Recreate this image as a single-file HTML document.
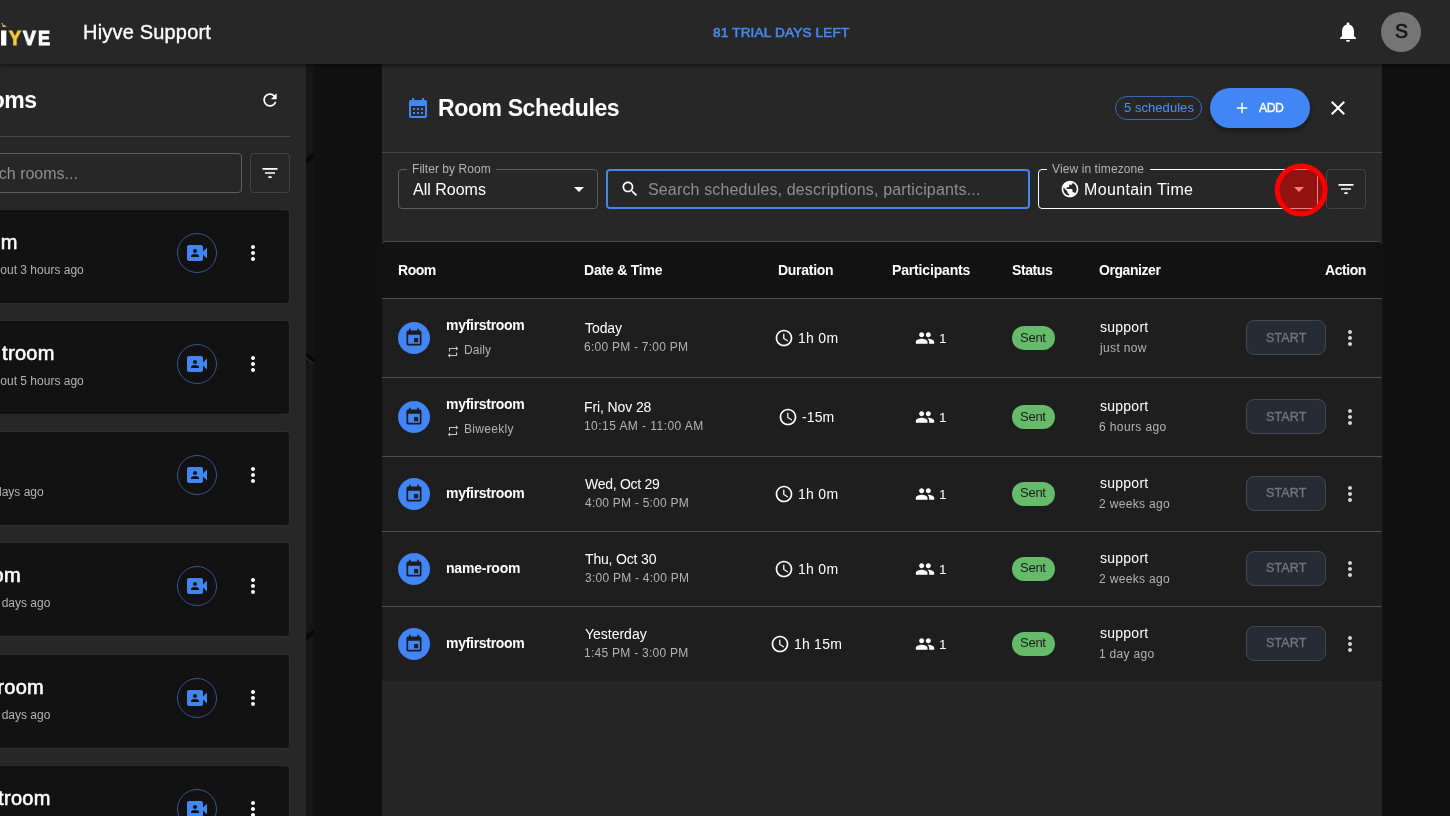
<!DOCTYPE html>
<html lang="en">
<head>
<meta charset="utf-8">
<title>Hiyve Support - Room Schedules</title>
<style>
*{box-sizing:border-box;margin:0;padding:0}
html,body{width:1450px;height:816px;overflow:hidden;background:#111;font-family:"Liberation Sans",sans-serif;color:#fff}
.abs{position:absolute}
.t{position:absolute;white-space:nowrap;line-height:1;will-change:transform}
svg{position:absolute;display:block}
#hdr{position:absolute;left:0;top:0;width:1450px;height:64px;background:#272727;box-shadow:0 2px 4px rgba(0,0,0,.45);overflow:hidden}
#left{position:absolute;left:0;top:64px;width:306px;height:752px;background:#272727;overflow:hidden}
#modal{position:absolute;left:382px;top:64px;width:1000px;height:752px;background:#272727;overflow:hidden}
</style>
</head>
<body>
<div id="left">
<div class="t" style="left:-41.1px;top:24.5px;font-size:23px;color:#fff;font-weight:bold;letter-spacing:-0.5px;margin-left:2px;">Rooms</div>
<svg style="left:260px;top:26px;" width="20" height="20" viewBox="0 0 24 24"><path fill="#fff" d="M17.65 6.35C16.2 4.9 14.21 4 12 4c-4.42 0-7.99 3.58-7.99 8s3.57 8 7.99 8c3.73 0 6.84-2.55 7.73-6h-2.08c-.82 2.33-3.04 4-5.65 4-3.31 0-6-2.69-6-6s2.69-6 6-6c1.66 0 3.14.69 4.22 1.78L13 11h7V4l-2.35 2.35z"/></svg>
<div class="abs" style="left:-10px;top:72px;width:300px;height:1px;background:#4a4a4a"></div>
<div class="abs" style="left:-40px;top:89px;width:282px;height:40px;border:1px solid #5e5e5e;border-radius:4px"></div>
<div class="t" style="left:-34.9px;top:101.5px;font-size:16px;color:#8f8f8f;">Search rooms...</div>
<div class="abs" style="left:250px;top:89px;width:40px;height:40px;border:1px solid #444;border-radius:4px"></div>
<svg style="left:260px;top:99px;" width="20" height="20" viewBox="0 0 24 24"><path fill="#fff" d="M10 18h4v-2h-4v2zM3 6v2h18V6H3zm3 7h12v-2H6v2z"/></svg>
<div class="abs" style="left:-20px;top:145px;width:310px;height:95px;background:#121212;border-radius:4px;border:1px solid #2d2d2d"></div>
<div class="t" style="left:-87.2px;top:168.0px;font-size:20px;color:#fff;-webkit-text-stroke:0.6px;letter-spacing:0.3px;margin-left:-3px;">myfirstroom</div>
<div class="t" style="left:-13.3px;top:200.0px;font-size:12px;color:#b3b3b3;">about 3 hours ago</div>
<div class="abs" style="left:177px;top:169px;width:40px;height:40px;border:1px solid #34578e;border-radius:50%"></div>
<svg style="left:185px;top:177px;" width="24" height="24" viewBox="0 0 24 24"><path fill="#4285f4" d="M18 10.48V6c0-1.1-.9-2-2-2H4c-1.1 0-2 .9-2 2v12c0 1.1.9 2 2 2h12c1.1 0 2-.9 2-2v-4.48l4 3.98v-11l-4 3.98zM10 8c1.1 0 2 .9 2 2s-.9 2-2 2-2-.9-2-2 .9-2 2-2zm4 8H6v-.57c0-.81.48-1.53 1.22-1.85.85-.37 1.79-.58 2.78-.58.99 0 1.93.21 2.78.58.74.32 1.22 1.04 1.22 1.85V16z"/></svg>
<svg style="left:241px;top:177px;" width="24" height="24" viewBox="0 0 24 24"><path fill="#fff" d="M12 8c1.1 0 2-.9 2-2s-.9-2-2-2-2 .9-2 2 .9 2 2 2zm0 2c-1.1 0-2 .9-2 2s.9 2 2 2 2-.9 2-2-.9-2-2-2zm0 6c-1.1 0-2 .9-2 2s.9 2 2 2 2-.9 2-2-.9-2-2-2z"/></svg>
<div class="abs" style="left:-20px;top:256px;width:310px;height:95px;background:#121212;border-radius:4px;border:1px solid #2d2d2d"></div>
<div class="t" style="left:-50.2px;top:279.0px;font-size:20px;color:#fff;-webkit-text-stroke:0.6px;letter-spacing:0.3px;margin-left:-3px;">myfirstroom</div>
<div class="t" style="left:-13.3px;top:311.0px;font-size:12px;color:#b3b3b3;">about 5 hours ago</div>
<div class="abs" style="left:0px;top:277px;width:1.5px;height:26px;background:#121212"></div>
<div class="abs" style="left:177px;top:280px;width:40px;height:40px;border:1px solid #34578e;border-radius:50%"></div>
<svg style="left:185px;top:288px;" width="24" height="24" viewBox="0 0 24 24"><path fill="#4285f4" d="M18 10.48V6c0-1.1-.9-2-2-2H4c-1.1 0-2 .9-2 2v12c0 1.1.9 2 2 2h12c1.1 0 2-.9 2-2v-4.48l4 3.98v-11l-4 3.98zM10 8c1.1 0 2 .9 2 2s-.9 2-2 2-2-.9-2-2 .9-2 2-2zm4 8H6v-.57c0-.81.48-1.53 1.22-1.85.85-.37 1.79-.58 2.78-.58.99 0 1.93.21 2.78.58.74.32 1.22 1.04 1.22 1.85V16z"/></svg>
<svg style="left:241px;top:288px;" width="24" height="24" viewBox="0 0 24 24"><path fill="#fff" d="M12 8c1.1 0 2-.9 2-2s-.9-2-2-2-2 .9-2 2 .9 2 2 2zm0 2c-1.1 0-2 .9-2 2s.9 2 2 2 2-.9 2-2-.9-2-2-2zm0 6c-1.1 0-2 .9-2 2s.9 2 2 2 2-.9 2-2-.9-2-2-2z"/></svg>
<div class="abs" style="left:-20px;top:367px;width:310px;height:95px;background:#121212;border-radius:4px;border:1px solid #2d2d2d"></div>
<div class="t" style="left:-15.4px;top:422.0px;font-size:12px;color:#b3b3b3;">4 days ago</div>
<div class="abs" style="left:177px;top:391px;width:40px;height:40px;border:1px solid #34578e;border-radius:50%"></div>
<svg style="left:185px;top:399px;" width="24" height="24" viewBox="0 0 24 24"><path fill="#4285f4" d="M18 10.48V6c0-1.1-.9-2-2-2H4c-1.1 0-2 .9-2 2v12c0 1.1.9 2 2 2h12c1.1 0 2-.9 2-2v-4.48l4 3.98v-11l-4 3.98zM10 8c1.1 0 2 .9 2 2s-.9 2-2 2-2-.9-2-2 .9-2 2-2zm4 8H6v-.57c0-.81.48-1.53 1.22-1.85.85-.37 1.79-.58 2.78-.58.99 0 1.93.21 2.78.58.74.32 1.22 1.04 1.22 1.85V16z"/></svg>
<svg style="left:241px;top:399px;" width="24" height="24" viewBox="0 0 24 24"><path fill="#fff" d="M12 8c1.1 0 2-.9 2-2s-.9-2-2-2-2 .9-2 2 .9 2 2 2zm0 2c-1.1 0-2 .9-2 2s.9 2 2 2 2-.9 2-2-.9-2-2-2zm0 6c-1.1 0-2 .9-2 2s.9 2 2 2 2-.9 2-2-.9-2-2-2z"/></svg>
<div class="abs" style="left:-20px;top:478px;width:310px;height:95px;background:#121212;border-radius:4px;border:1px solid #2d2d2d"></div>
<div class="t" style="left:-80.7px;top:501.0px;font-size:20px;color:#fff;-webkit-text-stroke:0.6px;letter-spacing:0.3px;margin-left:-3px;">name-room</div>
<div class="t" style="left:-15.1px;top:533.0px;font-size:12px;color:#b3b3b3;">14 days ago</div>
<div class="abs" style="left:177px;top:502px;width:40px;height:40px;border:1px solid #34578e;border-radius:50%"></div>
<svg style="left:185px;top:510px;" width="24" height="24" viewBox="0 0 24 24"><path fill="#4285f4" d="M18 10.48V6c0-1.1-.9-2-2-2H4c-1.1 0-2 .9-2 2v12c0 1.1.9 2 2 2h12c1.1 0 2-.9 2-2v-4.48l4 3.98v-11l-4 3.98zM10 8c1.1 0 2 .9 2 2s-.9 2-2 2-2-.9-2-2 .9-2 2-2zm4 8H6v-.57c0-.81.48-1.53 1.22-1.85.85-.37 1.79-.58 2.78-.58.99 0 1.93.21 2.78.58.74.32 1.22 1.04 1.22 1.85V16z"/></svg>
<svg style="left:241px;top:510px;" width="24" height="24" viewBox="0 0 24 24"><path fill="#fff" d="M12 8c1.1 0 2-.9 2-2s-.9-2-2-2-2 .9-2 2 .9 2 2 2zm0 2c-1.1 0-2 .9-2 2s.9 2 2 2 2-.9 2-2-.9-2-2-2zm0 6c-1.1 0-2 .9-2 2s.9 2 2 2 2-.9 2-2-.9-2-2-2z"/></svg>
<div class="abs" style="left:-20px;top:590px;width:310px;height:95px;background:#121212;border-radius:4px;border:1px solid #2d2d2d"></div>
<div class="t" style="left:-65.7px;top:613.0px;font-size:20px;color:#fff;-webkit-text-stroke:0.6px;letter-spacing:0.3px;margin-left:-3px;">secondroom</div>
<div class="t" style="left:-15.1px;top:645.0px;font-size:12px;color:#b3b3b3;">16 days ago</div>
<div class="abs" style="left:177px;top:614px;width:40px;height:40px;border:1px solid #34578e;border-radius:50%"></div>
<svg style="left:185px;top:622px;" width="24" height="24" viewBox="0 0 24 24"><path fill="#4285f4" d="M18 10.48V6c0-1.1-.9-2-2-2H4c-1.1 0-2 .9-2 2v12c0 1.1.9 2 2 2h12c1.1 0 2-.9 2-2v-4.48l4 3.98v-11l-4 3.98zM10 8c1.1 0 2 .9 2 2s-.9 2-2 2-2-.9-2-2 .9-2 2-2zm4 8H6v-.57c0-.81.48-1.53 1.22-1.85.85-.37 1.79-.58 2.78-.58.99 0 1.93.21 2.78.58.74.32 1.22 1.04 1.22 1.85V16z"/></svg>
<svg style="left:241px;top:622px;" width="24" height="24" viewBox="0 0 24 24"><path fill="#fff" d="M12 8c1.1 0 2-.9 2-2s-.9-2-2-2-2 .9-2 2 .9 2 2 2zm0 2c-1.1 0-2 .9-2 2s.9 2 2 2 2-.9 2-2-.9-2-2-2zm0 6c-1.1 0-2 .9-2 2s.9 2 2 2 2-.9 2-2-.9-2-2-2z"/></svg>
<div class="abs" style="left:-20px;top:701px;width:310px;height:95px;background:#121212;border-radius:4px;border:1px solid #2d2d2d"></div>
<div class="t" style="left:-54.2px;top:724.0px;font-size:20px;color:#fff;-webkit-text-stroke:0.6px;letter-spacing:0.3px;margin-left:-3px;">myfirstroom</div>
<div class="t" style="left:-15.1px;top:756.0px;font-size:12px;color:#b3b3b3;">17 days ago</div>
<div class="abs" style="left:177px;top:725px;width:40px;height:40px;border:1px solid #34578e;border-radius:50%"></div>
<svg style="left:185px;top:733px;" width="24" height="24" viewBox="0 0 24 24"><path fill="#4285f4" d="M18 10.48V6c0-1.1-.9-2-2-2H4c-1.1 0-2 .9-2 2v12c0 1.1.9 2 2 2h12c1.1 0 2-.9 2-2v-4.48l4 3.98v-11l-4 3.98zM10 8c1.1 0 2 .9 2 2s-.9 2-2 2-2-.9-2-2 .9-2 2-2zm4 8H6v-.57c0-.81.48-1.53 1.22-1.85.85-.37 1.79-.58 2.78-.58.99 0 1.93.21 2.78.58.74.32 1.22 1.04 1.22 1.85V16z"/></svg>
<svg style="left:241px;top:733px;" width="24" height="24" viewBox="0 0 24 24"><path fill="#fff" d="M12 8c1.1 0 2-.9 2-2s-.9-2-2-2-2 .9-2 2 .9 2 2 2zm0 2c-1.1 0-2 .9-2 2s.9 2 2 2 2-.9 2-2-.9-2-2-2zm0 6c-1.1 0-2 .9-2 2s.9 2 2 2 2-.9 2-2-.9-2-2-2z"/></svg>
</div>
<svg style="left:306px;top:64px" width="8" height="752" viewBox="0 0 8 752"><rect width="8" height="752" fill="#161616"/><rect y="96" width="8" height="196" fill="#141414"/><path fill="#090909" d="M0 94.500L8 88.500V94.500L0 100z M0 288.500L8 294.500V299L0 293z M0 571L8 565V570.500L0 576.500z"/><path fill="#262626" d="M0 293L8 299V301L0 295z"/></svg>
<div id="modal">
<svg style="left:24px;top:32px;" width="24" height="24" viewBox="0 0 24 24"><path fill="#4285f4" d="M19 4h-1V2h-2v2H8V2H6v2H5c-1.11 0-1.99.9-1.99 2L3 20c0 1.1.89 2 2 2h14c1.1 0 2-.9 2-2V6c0-1.1-.9-2-2-2zm0 16H5V10h14v10zM9 14H7v-2h2v2zm4 0h-2v-2h2v2zm4 0h-2v-2h2v2zm-8 4H7v-2h2v2zm4 0h-2v-2h2v2zm4 0h-2v-2h2v2z"/></svg>
<div class="t" style="left:55.5px;top:32.5px;font-size:23px;color:#fff;font-weight:bold;letter-spacing:-0.38px;">Room Schedules</div>
<div class="abs" style="left:733px;top:32px;width:87px;height:24px;border:1px solid #3569bd;border-radius:12px"></div>
<div class="t" style="left:741.7px;top:37.0px;font-size:13px;color:#4f8ff5;letter-spacing:0.05px;">5 schedules</div>
<div class="abs" style="left:828px;top:24px;width:100px;height:40px;background:#4285f4;border-radius:20px;box-shadow:0 3px 5px rgba(0,0,0,.4)"></div>
<svg style="left:851px;top:35px;" width="18" height="18" viewBox="0 0 24 24"><path fill="#fff" d="M19 13h-6v6h-2v-6H5v-2h6V5h2v6h6v2z"/></svg>
<div class="t" style="left:877.3px;top:37.9px;font-size:12.2px;color:#fff;letter-spacing:-0.45px;-webkit-text-stroke:0.35px;">ADD</div>
<svg style="left:944px;top:32px;" width="24" height="24" viewBox="0 0 24 24"><path fill="#fff" d="M19 6.41 17.59 5 12 10.59 6.41 5 5 6.41 10.59 12 5 17.59 6.41 19 12 13.41 17.59 19 19 17.59 13.41 12z"/></svg>
<div class="abs" style="left:0px;top:88px;width:1000px;height:1px;background:#454545"></div>
<div class="abs" style="left:16px;top:105px;width:200px;height:40px;border:1px solid #5e5e5e;border-radius:4px"></div>
<div class="abs" style="left:25px;top:103px;width:89px;height:5px;background:#272727"></div>
<div class="t" style="left:29.8px;top:99.0px;font-size:12px;color:#b3b3b3;letter-spacing:0.05px;">Filter by Room</div>
<div class="t" style="left:30.8px;top:117.5px;font-size:16px;color:#fff;">All Rooms</div>
<svg style="left:185px;top:113px;" width="24" height="24" viewBox="0 0 24 24"><path fill="#fff" d="M7 10l5 5 5-5z"/></svg>
<div class="abs" style="left:224px;top:105px;width:424px;height:40px;border:2px solid #4285f4;border-radius:4px"></div>
<svg style="left:238px;top:115px;" width="20" height="20" viewBox="0 0 24 24"><path fill="#fff" d="M15.5 14h-.79l-.28-.27C15.41 12.59 16 11.11 16 9.5 16 5.91 13.09 3 9.5 3S3 5.91 3 9.5 5.91 16 9.5 16c1.61 0 3.09-.59 4.23-1.57l.27.28v.79l5 4.99L20.49 19l-4.99-5zm-6 0C7.01 14 5 11.99 5 9.5S7.01 5 9.5 5 14 7.01 14 9.5 11.99 14 9.5 14z"/></svg>
<div class="t" style="left:265.9px;top:117.5px;font-size:16px;color:#8f8f8f;letter-spacing:0.15px;">Search schedules, descriptions, participants...</div>
<div class="abs" style="left:656px;top:105px;width:280px;height:40px;border:1px solid #fff;border-radius:4px"></div>
<div class="abs" style="left:665px;top:103px;width:103px;height:5px;background:#272727"></div>
<div class="t" style="left:670.3px;top:99.0px;font-size:12px;color:#b3b3b3;letter-spacing:0.1px;">View in timezone</div>
<svg style="left:677.8px;top:115.30000000000001px;" width="20" height="20" viewBox="0 0 24 24"><path fill="#fff" d="M12 2C6.48 2 2 6.48 2 12s4.48 10 10 10 10-4.48 10-10S17.52 2 12 2zm-1 17.93c-3.95-.49-7-3.85-7-7.93 0-.62.08-1.21.21-1.79L9 15v1c0 1.1.9 2 2 2v1.93zm6.9-2.54c-.26-.81-1-1.39-1.9-1.39h-1v-3c0-.55-.45-1-1-1H8v-2h2c.55 0 1-.45 1-1V7h2c1.1 0 2-.9 2-2v-.41c2.93 1.19 5 4.06 5 7.41 0 2.08-.8 3.97-2.1 5.39z"/></svg>
<div class="t" style="left:701.6px;top:117.5px;font-size:16px;color:#fff;letter-spacing:0.34px;">Mountain Time</div>
<svg style="left:905px;top:113px;" width="24" height="24" viewBox="0 0 24 24"><path fill="#fff" d="M7 10l5 5 5-5z"/></svg>
<div class="abs" style="left:944px;top:105px;width:40px;height:40px;border:1px solid #444;border-radius:4px"></div>
<svg style="left:954px;top:115px;" width="20" height="20" viewBox="0 0 24 24"><path fill="#fff" d="M10 18h4v-2h-4v2zM3 6v2h18V6H3zm3 7h12v-2H6v2z"/></svg>
<svg style="left:889px;top:96px" width="60" height="60" viewBox="0 0 60 60"><circle cx="30.2" cy="30" r="24" fill="rgba(255,0,0,0.5)" stroke="#f00" stroke-width="5"/></svg>
<div class="abs" style="left:0px;top:177px;width:1000px;height:57px;background:#121212;border-top:1px solid #484848;border-radius:4px 4px 0 0"></div>
<div class="t" style="left:15.5px;top:199.0px;font-size:14px;color:#fff;font-weight:bold;letter-spacing:-0.48px;">Room</div>
<div class="t" style="left:201.5px;top:199.0px;font-size:14px;color:#fff;font-weight:bold;letter-spacing:-0.21px;">Date &amp; Time</div>
<div class="t" style="left:396.0px;top:199.0px;font-size:14px;color:#fff;font-weight:bold;letter-spacing:-0.28px;">Duration</div>
<div class="t" style="left:509.9px;top:199.0px;font-size:14px;color:#fff;font-weight:bold;letter-spacing:-0.16px;">Participants</div>
<div class="t" style="left:630.3px;top:199.0px;font-size:14px;color:#fff;font-weight:bold;letter-spacing:-0.42px;">Status</div>
<div class="t" style="left:717.2px;top:199.0px;font-size:14px;color:#fff;font-weight:bold;letter-spacing:-0.43px;">Organizer</div>
<div class="t" style="left:942.5px;top:199.0px;font-size:14px;color:#fff;font-weight:bold;letter-spacing:-0.43px;">Action</div>
<div class="abs" style="left:0px;top:234px;width:1000px;height:79px;background:#1e1e1e;border-top:1px solid #4e4e4e"></div>
<div class="abs" style="left:16px;top:258.0px;width:32px;height:32px;background:#4285f4;border-radius:50%"></div>
<svg style="left:22px;top:264.0px;" width="20" height="20" viewBox="0 0 24 24"><path fill="#1c1c1c" d="M17 12h-5v5h5v-5zM16 1v2H8V1H6v2H5c-1.11 0-1.99.9-1.99 2L3 19c0 1.1.89 2 2 2h14c1.1 0 2-.9 2-2V5c0-1.1-.9-2-2-2h-1V1h-2zm3 18H5V8h14v11z"/></svg>
<div class="t" style="left:64.0px;top:254.0px;font-size:14px;color:#fff;font-weight:bold;letter-spacing:-0.29px;">myfirstroom</div>
<svg style="left:64.10000000000002px;top:280.5px;" width="14" height="14" viewBox="0 0 24 24"><path fill="#c2c2c2" d="M7 7h10v3l4-4-4-4v3H5v6h2V7zm10 10H7v-3l-4 4 4 4v-3h12v-6h-2v4z"/></svg>
<div class="t" style="left:81.8px;top:280.0px;font-size:12px;color:#b3b3b3;letter-spacing:0.06px;">Daily</div>
<div class="t" style="left:202.5px;top:257.0px;font-size:14px;color:#fff;letter-spacing:-0.07px;">Today</div>
<div class="t" style="left:202.4px;top:277.0px;font-size:12px;color:#b3b3b3;letter-spacing:0.25px;">6:00 PM - 7:00 PM</div>
<svg style="left:391.79999999999995px;top:263.8px;" width="20" height="20" viewBox="0 0 24 24"><path fill="#fff" d="M11.99 2C6.47 2 2 6.48 2 12s4.47 10 9.99 10C17.52 22 22 17.52 22 12S17.52 2 11.99 2zM12 20c-4.42 0-8-3.58-8-8s3.58-8 8-8 8 3.580 8 8-3.580 8-8 8zm.5-13H11v6l5.250 3.150.75-1.230-4.500-2.670z"/></svg>
<div class="t" style="left:415.6px;top:267.0px;font-size:14px;color:#fff;letter-spacing:0.29px;">1h 0m</div>
<svg style="left:532.5px;top:263.8px;" width="20" height="20" viewBox="0 0 24 24"><path fill="#fff" d="M16 11c1.66 0 2.990-1.340 2.990-3S17.660 5 16 5c-1.660 0-3 1.340-3 3s1.340 3 3 3zm-8 0c1.660 0 2.990-1.340 2.990-3S9.660 5 8 5C6.340 5 5 6.340 5 8s1.340 3 3 3zm0 2c-2.330 0-7 1.170-7 3.500V19h14v-2.500c0-2.330-4.670-3.500-7-3.500zm8 0c-.290 0-.620.020-.970.050 1.160.840 1.970 1.970 1.970 3.450V19h6v-2.500c0-2.330-4.670-3.500-7-3.500z"/></svg>
<div class="t" style="left:557.4px;top:267.8px;font-size:13.5px;color:#fff;">1</div>
<div class="abs" style="left:630px;top:262.0px;width:43px;height:24px;background:#66bb6a;border-radius:12px"></div>
<div class="t" style="left:637.8px;top:267.0px;font-size:13px;color:#1a1a1a;letter-spacing:-0.26px;">Sent</div>
<div class="t" style="left:717.5px;top:256.0px;font-size:14px;color:#fff;letter-spacing:0.25px;">support</div>
<div class="t" style="left:718.1px;top:278.0px;font-size:12px;color:#b3b3b3;letter-spacing:0.35px;">just now</div>
<div class="abs" style="left:864px;top:256.0px;width:80px;height:35px;background:#272b34;border:1px solid #434853;border-radius:8px"></div>
<div class="t" style="left:883.5px;top:267.8px;font-size:12.5px;color:#71757e;letter-spacing:0.12px;-webkit-text-stroke:0.35px;">START</div>
<svg style="left:956px;top:262.0px;" width="24" height="24" viewBox="0 0 24 24"><path fill="#d4d4d4" d="M12 8c1.1 0 2-.9 2-2s-.9-2-2-2-2 .9-2 2 .9 2 2 2zm0 2c-1.1 0-2 .9-2 2s.9 2 2 2 2-.9 2-2-.9-2-2-2zm0 6c-1.1 0-2 .9-2 2s.9 2 2 2 2-.9 2-2-.9-2-2-2z"/></svg>
<div class="abs" style="left:0px;top:313px;width:1000px;height:79px;background:#1e1e1e;border-top:1px solid #4e4e4e"></div>
<div class="abs" style="left:16px;top:337.0px;width:32px;height:32px;background:#4285f4;border-radius:50%"></div>
<svg style="left:22px;top:343.0px;" width="20" height="20" viewBox="0 0 24 24"><path fill="#1c1c1c" d="M17 12h-5v5h5v-5zM16 1v2H8V1H6v2H5c-1.11 0-1.99.9-1.99 2L3 19c0 1.1.89 2 2 2h14c1.1 0 2-.9 2-2V5c0-1.1-.9-2-2-2h-1V1h-2zm3 18H5V8h14v11z"/></svg>
<div class="t" style="left:64.0px;top:333.0px;font-size:14px;color:#fff;font-weight:bold;letter-spacing:-0.29px;">myfirstroom</div>
<svg style="left:64.10000000000002px;top:359.5px;" width="14" height="14" viewBox="0 0 24 24"><path fill="#c2c2c2" d="M7 7h10v3l4-4-4-4v3H5v6h2V7zm10 10H7v-3l-4 4 4 4v-3h12v-6h-2v4z"/></svg>
<div class="t" style="left:81.8px;top:359.0px;font-size:12px;color:#b3b3b3;letter-spacing:0.29px;">Biweekly</div>
<div class="t" style="left:201.7px;top:336.0px;font-size:14px;color:#fff;letter-spacing:-0.11px;">Fri, Nov 28</div>
<div class="t" style="left:202.1px;top:356.0px;font-size:12px;color:#b3b3b3;letter-spacing:0.45px;">10:15 AM - 11:00 AM</div>
<svg style="left:395.79999999999995px;top:342.8px;" width="20" height="20" viewBox="0 0 24 24"><path fill="#fff" d="M11.99 2C6.47 2 2 6.48 2 12s4.47 10 9.99 10C17.52 22 22 17.52 22 12S17.52 2 11.99 2zM12 20c-4.42 0-8-3.58-8-8s3.58-8 8-8 8 3.580 8 8-3.580 8-8 8zm.5-13H11v6l5.250 3.150.75-1.230-4.500-2.670z"/></svg>
<div class="t" style="left:419.8px;top:346.0px;font-size:14px;color:#fff;letter-spacing:0.11px;">-15m</div>
<svg style="left:532.5px;top:342.8px;" width="20" height="20" viewBox="0 0 24 24"><path fill="#fff" d="M16 11c1.66 0 2.990-1.340 2.990-3S17.660 5 16 5c-1.660 0-3 1.340-3 3s1.340 3 3 3zm-8 0c1.660 0 2.990-1.340 2.990-3S9.660 5 8 5C6.340 5 5 6.340 5 8s1.340 3 3 3zm0 2c-2.330 0-7 1.170-7 3.500V19h14v-2.500c0-2.330-4.670-3.500-7-3.500zm8 0c-.290 0-.620.020-.970.050 1.160.840 1.970 1.970 1.970 3.450V19h6v-2.500c0-2.330-4.670-3.500-7-3.500z"/></svg>
<div class="t" style="left:557.4px;top:346.8px;font-size:13.5px;color:#fff;">1</div>
<div class="abs" style="left:630px;top:341.0px;width:43px;height:24px;background:#66bb6a;border-radius:12px"></div>
<div class="t" style="left:637.8px;top:346.0px;font-size:13px;color:#1a1a1a;letter-spacing:-0.26px;">Sent</div>
<div class="t" style="left:717.5px;top:335.0px;font-size:14px;color:#fff;letter-spacing:0.25px;">support</div>
<div class="t" style="left:717.2px;top:357.0px;font-size:12px;color:#b3b3b3;letter-spacing:0.38px;">6 hours ago</div>
<div class="abs" style="left:864px;top:335.0px;width:80px;height:35px;background:#272b34;border:1px solid #434853;border-radius:8px"></div>
<div class="t" style="left:883.5px;top:346.8px;font-size:12.5px;color:#71757e;letter-spacing:0.12px;-webkit-text-stroke:0.35px;">START</div>
<svg style="left:956px;top:341.0px;" width="24" height="24" viewBox="0 0 24 24"><path fill="#d4d4d4" d="M12 8c1.1 0 2-.9 2-2s-.9-2-2-2-2 .9-2 2 .9 2 2 2zm0 2c-1.1 0-2 .9-2 2s.9 2 2 2 2-.9 2-2-.9-2-2-2zm0 6c-1.1 0-2 .9-2 2s.9 2 2 2 2-.9 2-2-.9-2-2-2z"/></svg>
<div class="abs" style="left:0px;top:392px;width:1000px;height:75px;background:#1e1e1e;border-top:1px solid #4e4e4e"></div>
<div class="abs" style="left:16px;top:414.0px;width:32px;height:32px;background:#4285f4;border-radius:50%"></div>
<svg style="left:22px;top:420.0px;" width="20" height="20" viewBox="0 0 24 24"><path fill="#1c1c1c" d="M17 12h-5v5h5v-5zM16 1v2H8V1H6v2H5c-1.11 0-1.99.9-1.99 2L3 19c0 1.1.89 2 2 2h14c1.1 0 2-.9 2-2V5c0-1.1-.9-2-2-2h-1V1h-2zm3 18H5V8h14v11z"/></svg>
<div class="t" style="left:64.0px;top:422.0px;font-size:14px;color:#fff;font-weight:bold;letter-spacing:-0.29px;">myfirstroom</div>
<div class="t" style="left:202.7px;top:413.0px;font-size:14px;color:#fff;letter-spacing:-0.28px;">Wed, Oct 29</div>
<div class="t" style="left:202.8px;top:433.0px;font-size:12px;color:#b3b3b3;letter-spacing:0.23px;">4:00 PM - 5:00 PM</div>
<svg style="left:391.79999999999995px;top:419.8px;" width="20" height="20" viewBox="0 0 24 24"><path fill="#fff" d="M11.99 2C6.47 2 2 6.48 2 12s4.47 10 9.99 10C17.52 22 22 17.52 22 12S17.52 2 11.99 2zM12 20c-4.42 0-8-3.58-8-8s3.58-8 8-8 8 3.580 8 8-3.580 8-8 8zm.5-13H11v6l5.250 3.150.75-1.230-4.500-2.670z"/></svg>
<div class="t" style="left:415.6px;top:423.0px;font-size:14px;color:#fff;letter-spacing:0.29px;">1h 0m</div>
<svg style="left:532.5px;top:419.8px;" width="20" height="20" viewBox="0 0 24 24"><path fill="#fff" d="M16 11c1.66 0 2.990-1.340 2.990-3S17.660 5 16 5c-1.660 0-3 1.340-3 3s1.340 3 3 3zm-8 0c1.660 0 2.990-1.340 2.990-3S9.660 5 8 5C6.340 5 5 6.340 5 8s1.340 3 3 3zm0 2c-2.330 0-7 1.170-7 3.500V19h14v-2.500c0-2.330-4.670-3.500-7-3.500zm8 0c-.290 0-.620.020-.970.050 1.160.840 1.970 1.970 1.970 3.450V19h6v-2.500c0-2.330-4.670-3.500-7-3.500z"/></svg>
<div class="t" style="left:557.4px;top:423.8px;font-size:13.5px;color:#fff;">1</div>
<div class="abs" style="left:630px;top:418.0px;width:43px;height:24px;background:#66bb6a;border-radius:12px"></div>
<div class="t" style="left:637.8px;top:422.0px;font-size:13px;color:#1a1a1a;letter-spacing:-0.26px;">Sent</div>
<div class="t" style="left:717.5px;top:412.0px;font-size:14px;color:#fff;letter-spacing:0.25px;">support</div>
<div class="t" style="left:717.2px;top:434.0px;font-size:12px;color:#b3b3b3;letter-spacing:0.34px;">2 weeks ago</div>
<div class="abs" style="left:864px;top:412.0px;width:80px;height:35px;background:#272b34;border:1px solid #434853;border-radius:8px"></div>
<div class="t" style="left:883.5px;top:422.8px;font-size:12.5px;color:#71757e;letter-spacing:0.12px;-webkit-text-stroke:0.35px;">START</div>
<svg style="left:956px;top:418.0px;" width="24" height="24" viewBox="0 0 24 24"><path fill="#d4d4d4" d="M12 8c1.1 0 2-.9 2-2s-.9-2-2-2-2 .9-2 2 .9 2 2 2zm0 2c-1.1 0-2 .9-2 2s.9 2 2 2 2-.9 2-2-.9-2-2-2zm0 6c-1.1 0-2 .9-2 2s.9 2 2 2 2-.9 2-2-.9-2-2-2z"/></svg>
<div class="abs" style="left:0px;top:467px;width:1000px;height:75px;background:#1e1e1e;border-top:1px solid #4e4e4e"></div>
<div class="abs" style="left:16px;top:489.0px;width:32px;height:32px;background:#4285f4;border-radius:50%"></div>
<svg style="left:22px;top:495.0px;" width="20" height="20" viewBox="0 0 24 24"><path fill="#1c1c1c" d="M17 12h-5v5h5v-5zM16 1v2H8V1H6v2H5c-1.11 0-1.99.9-1.99 2L3 19c0 1.1.89 2 2 2h14c1.1 0 2-.9 2-2V5c0-1.1-.9-2-2-2h-1V1h-2zm3 18H5V8h14v11z"/></svg>
<div class="t" style="left:64.0px;top:497.0px;font-size:14px;color:#fff;font-weight:bold;letter-spacing:-0.22px;">name-room</div>
<div class="t" style="left:202.5px;top:488.0px;font-size:14px;color:#fff;letter-spacing:-0.17px;">Thu, Oct 30</div>
<div class="t" style="left:202.5px;top:508.0px;font-size:12px;color:#b3b3b3;letter-spacing:0.24px;">3:00 PM - 4:00 PM</div>
<svg style="left:391.79999999999995px;top:494.79999999999995px;" width="20" height="20" viewBox="0 0 24 24"><path fill="#fff" d="M11.99 2C6.47 2 2 6.48 2 12s4.47 10 9.99 10C17.52 22 22 17.52 22 12S17.52 2 11.99 2zM12 20c-4.42 0-8-3.58-8-8s3.58-8 8-8 8 3.580 8 8-3.580 8-8 8zm.5-13H11v6l5.250 3.150.75-1.230-4.500-2.670z"/></svg>
<div class="t" style="left:415.6px;top:498.0px;font-size:14px;color:#fff;letter-spacing:0.29px;">1h 0m</div>
<svg style="left:532.5px;top:494.79999999999995px;" width="20" height="20" viewBox="0 0 24 24"><path fill="#fff" d="M16 11c1.66 0 2.990-1.340 2.990-3S17.660 5 16 5c-1.660 0-3 1.340-3 3s1.340 3 3 3zm-8 0c1.660 0 2.990-1.340 2.990-3S9.660 5 8 5C6.340 5 5 6.340 5 8s1.340 3 3 3zm0 2c-2.330 0-7 1.170-7 3.500V19h14v-2.500c0-2.330-4.670-3.500-7-3.500zm8 0c-.290 0-.620.020-.970.050 1.160.840 1.970 1.970 1.970 3.450V19h6v-2.500c0-2.330-4.670-3.500-7-3.500z"/></svg>
<div class="t" style="left:557.4px;top:498.8px;font-size:13.5px;color:#fff;">1</div>
<div class="abs" style="left:630px;top:493.0px;width:43px;height:24px;background:#66bb6a;border-radius:12px"></div>
<div class="t" style="left:637.8px;top:497.0px;font-size:13px;color:#1a1a1a;letter-spacing:-0.26px;">Sent</div>
<div class="t" style="left:717.5px;top:487.0px;font-size:14px;color:#fff;letter-spacing:0.25px;">support</div>
<div class="t" style="left:717.2px;top:509.0px;font-size:12px;color:#b3b3b3;letter-spacing:0.34px;">2 weeks ago</div>
<div class="abs" style="left:864px;top:487.0px;width:80px;height:35px;background:#272b34;border:1px solid #434853;border-radius:8px"></div>
<div class="t" style="left:883.5px;top:497.8px;font-size:12.5px;color:#71757e;letter-spacing:0.12px;-webkit-text-stroke:0.35px;">START</div>
<svg style="left:956px;top:493.0px;" width="24" height="24" viewBox="0 0 24 24"><path fill="#d4d4d4" d="M12 8c1.1 0 2-.9 2-2s-.9-2-2-2-2 .9-2 2 .9 2 2 2zm0 2c-1.1 0-2 .9-2 2s.9 2 2 2 2-.9 2-2-.9-2-2-2zm0 6c-1.1 0-2 .9-2 2s.9 2 2 2 2-.9 2-2-.9-2-2-2z"/></svg>
<div class="abs" style="left:0px;top:542px;width:1000px;height:75px;background:#1e1e1e;border-top:1px solid #4e4e4e"></div>
<div class="abs" style="left:16px;top:564.0px;width:32px;height:32px;background:#4285f4;border-radius:50%"></div>
<svg style="left:22px;top:570.0px;" width="20" height="20" viewBox="0 0 24 24"><path fill="#1c1c1c" d="M17 12h-5v5h5v-5zM16 1v2H8V1H6v2H5c-1.11 0-1.99.9-1.99 2L3 19c0 1.1.89 2 2 2h14c1.1 0 2-.9 2-2V5c0-1.1-.9-2-2-2h-1V1h-2zm3 18H5V8h14v11z"/></svg>
<div class="t" style="left:64.0px;top:572.0px;font-size:14px;color:#fff;font-weight:bold;letter-spacing:-0.29px;">myfirstroom</div>
<div class="t" style="left:202.5px;top:563.0px;font-size:14px;color:#fff;letter-spacing:-0.01px;">Yesterday</div>
<div class="t" style="left:202.1px;top:583.0px;font-size:12px;color:#b3b3b3;letter-spacing:0.27px;">1:45 PM - 3:00 PM</div>
<svg style="left:387.9px;top:569.8px;" width="20" height="20" viewBox="0 0 24 24"><path fill="#fff" d="M11.99 2C6.47 2 2 6.48 2 12s4.47 10 9.99 10C17.52 22 22 17.52 22 12S17.52 2 11.99 2zM12 20c-4.42 0-8-3.58-8-8s3.58-8 8-8 8 3.580 8 8-3.580 8-8 8zm.5-13H11v6l5.250 3.150.75-1.230-4.500-2.670z"/></svg>
<div class="t" style="left:412.1px;top:573.0px;font-size:14px;color:#fff;letter-spacing:0.22px;">1h 15m</div>
<svg style="left:532.5px;top:569.8px;" width="20" height="20" viewBox="0 0 24 24"><path fill="#fff" d="M16 11c1.66 0 2.990-1.340 2.990-3S17.660 5 16 5c-1.660 0-3 1.340-3 3s1.340 3 3 3zm-8 0c1.660 0 2.990-1.340 2.990-3S9.660 5 8 5C6.340 5 5 6.340 5 8s1.340 3 3 3zm0 2c-2.330 0-7 1.170-7 3.500V19h14v-2.500c0-2.330-4.670-3.500-7-3.500zm8 0c-.290 0-.620.020-.970.050 1.160.840 1.970 1.970 1.970 3.450V19h6v-2.500c0-2.330-4.670-3.500-7-3.500z"/></svg>
<div class="t" style="left:557.4px;top:573.8px;font-size:13.5px;color:#fff;">1</div>
<div class="abs" style="left:630px;top:568.0px;width:43px;height:24px;background:#66bb6a;border-radius:12px"></div>
<div class="t" style="left:637.8px;top:572.0px;font-size:13px;color:#1a1a1a;letter-spacing:-0.26px;">Sent</div>
<div class="t" style="left:717.5px;top:562.0px;font-size:14px;color:#fff;letter-spacing:0.25px;">support</div>
<div class="t" style="left:716.9px;top:584.0px;font-size:12px;color:#b3b3b3;letter-spacing:0.3px;">1 day ago</div>
<div class="abs" style="left:864px;top:562.0px;width:80px;height:35px;background:#272b34;border:1px solid #434853;border-radius:8px"></div>
<div class="t" style="left:883.5px;top:572.8px;font-size:12.5px;color:#71757e;letter-spacing:0.12px;-webkit-text-stroke:0.35px;">START</div>
<svg style="left:956px;top:568.0px;" width="24" height="24" viewBox="0 0 24 24"><path fill="#d4d4d4" d="M12 8c1.1 0 2-.9 2-2s-.9-2-2-2-2 .9-2 2 .9 2 2 2zm0 2c-1.1 0-2 .9-2 2s.9 2 2 2 2-.9 2-2-.9-2-2-2zm0 6c-1.1 0-2 .9-2 2s.9 2 2 2 2-.9 2-2-.9-2-2-2z"/></svg>
<div class="abs" style="left:0px;top:617px;width:1000px;height:140px;background:#262626"></div>
</div>
<div id="hdr">
<div class="abs" style="left:0;top:0;width:60px;height:64px;will-change:transform">
<span class="t" style="left:-15.76px;top:26.69px;font-size:21.1px;font-weight:bold;color:#fff;transform-origin:0 0;transform:scaleX(0.923);-webkit-text-stroke:1.1px">H</span>
<span class="t" style="left:0.12px;top:26.69px;font-size:21.1px;font-weight:bold;color:#fff;transform-origin:0 0;transform:scaleX(1.250);-webkit-text-stroke:1.1px">I</span>
<span class="t" style="left:8.90px;top:26.69px;font-size:21.1px;font-weight:bold;color:#f7cb3b;transform-origin:0 0;transform:scaleX(0.841);-webkit-text-stroke:1.1px">Y</span>
<span class="t" style="left:23.40px;top:26.69px;font-size:21.1px;font-weight:bold;color:#fff;transform-origin:0 0;transform:scaleX(0.905);-webkit-text-stroke:1.1px">V</span>
<span class="t" style="left:38.00px;top:26.69px;font-size:21.1px;font-weight:bold;color:#fff;transform-origin:0 0;transform:scaleX(0.852);-webkit-text-stroke:1.1px">E</span>
<svg style="left:0;top:20px" width="10" height="10" viewBox="0 0 10 10"><path fill="#e9cf6a" fill-opacity=".85" d="M1.1 3.1 L2.3 2.9 L3 3.8 L3.2 4.8 L4.6 4.9 L5 5.8 L6.2 6.1 L6.3 6.9 L2.6 6.9 L2.3 4.6 Z"/></svg>
</div>
<div class="t" style="left:83.3px;top:22.0px;font-size:20px;color:#fff;letter-spacing:0.19px;-webkit-text-stroke:0.35px;">Hiyve Support</div>
<div class="t" style="left:712.5px;top:25.7px;font-size:13.6px;color:#4a88ea;letter-spacing:0.17px;-webkit-text-stroke:0.6px;">81 TRIAL DAYS LEFT</div>
<svg style="left:1336px;top:20px;" width="24" height="24" viewBox="0 0 24 24"><path fill="#fff" d="M12 22c1.100 0 2-.900 2-2h-4c0 1.100.890 2 2 2zm6-6v-5c0-3.070-1.640-5.640-4.500-6.320V4c0-.830-.670-1.500-1.500-1.500s-1.500.670-1.500 1.500v.680C7.630 5.360 6 7.920 6 11v5l-2 2v1h16v-1l-2-2z"/></svg>
<div class="abs" style="left:1381px;top:12px;width:40px;height:40px;background:#757575;border-radius:50%"></div>
<div class="t" style="left:1395.2px;top:22.2px;font-size:19.5px;color:#151515;-webkit-text-stroke:0.7px;">S</div>
</div>
</body>
</html>
